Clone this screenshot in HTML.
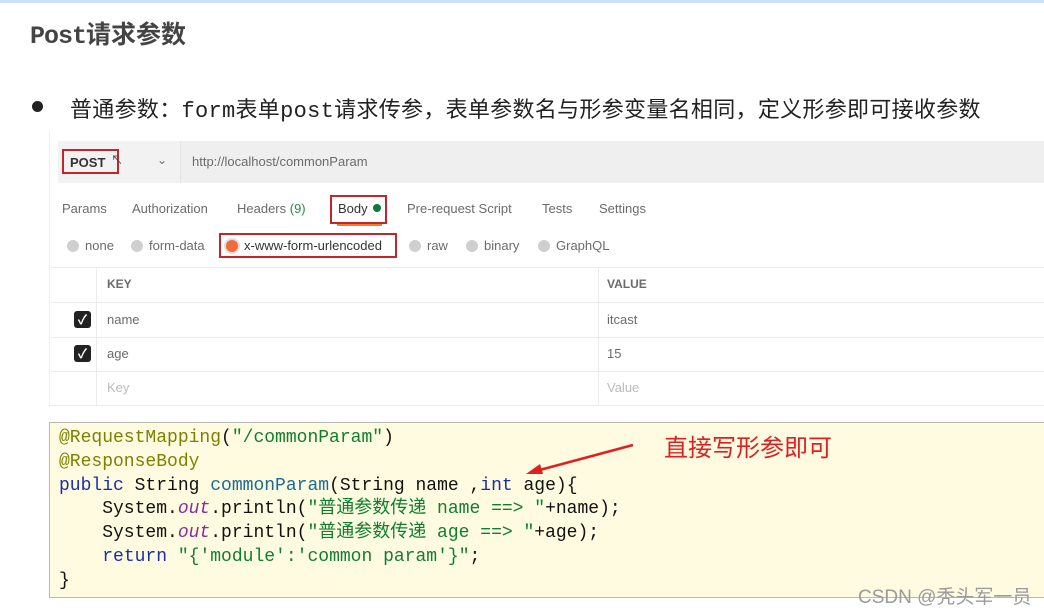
<!DOCTYPE html>
<html><head><meta charset="utf-8"><style>
*{margin:0;padding:0;box-sizing:border-box}
body{width:1044px;height:613px;background:#fff;position:relative;overflow:hidden;font-family:"Liberation Sans","Noto Sans CJK SC",sans-serif}
.a{position:absolute;white-space:nowrap}
.pm{font-size:13px;color:#6b6b6b}
.rb{position:absolute;border:2.5px solid #c0262a}
.dot{position:absolute;width:12px;height:12px;border-radius:50%;background:#cfcfcf}
.hl{position:absolute;height:1px;background:#ececec}
.vl{position:absolute;width:1px;background:#ececec}
.cb{position:absolute;width:17px;height:17px;background:#222;border-radius:3px;color:#fff;font-size:13px;line-height:17px;text-align:center;font-weight:bold}
.code{font-family:"Liberation Mono","Noto Sans CJK SC",monospace;font-size:18px;color:#111}
.an{color:#808000}.st{color:#0f7f2f}.kw{color:#1a2ea8}.fn{color:#1a6a9a}.it{color:#8a2c9a;font-style:italic}
</style></head><body>
<div class="a" style="left:0;top:0;width:1044px;height:3px;background:#cfe2f5"></div>
<div class="a" style="left:30px;top:15px;font-size:25px;font-weight:bold;color:#444;font-family:'Liberation Mono','Noto Sans CJK SC',monospace;letter-spacing:-1px">Post<span style="font-family:'Noto Sans CJK SC',sans-serif;letter-spacing:0">请求参数</span></div>
<div class="a" style="left:32px;top:101px;width:11px;height:11px;border-radius:50%;background:#222"></div>
<div class="a" style="left:70px;top:92px;font-size:22px;color:#222;font-family:'Liberation Mono','Noto Sans CJK SC',monospace;letter-spacing:0.3px">普通参数：form表单post请求传参，表单参数名与形参变量名相同，定义形参即可接收参数</div>

<!-- postman -->
<div class="a" style="left:49px;top:132px;width:995px;height:275px;background:#fff;border-left:1px solid #f0f0f0"></div>
<div class="a" style="left:58px;top:141px;width:986px;height:42px;background:#f2f2f2"></div>
<div class="a" style="left:180px;top:141px;width:864px;height:42px;background:#efefef;border-left:1px solid #e4e4e4"></div>
<div class="a pm" style="left:70px;top:155px;font-weight:bold;color:#333">POST</div>
<div class="a pm" style="left:157px;top:153px;font-size:12px">&#8964;</div>
<div class="a pm" style="left:192px;top:154px">http://localhost/commonParam</div>
<div class="rb" style="left:62px;top:149px;width:57px;height:25px"></div>
<div class="a" style="left:111px;top:151px;font-size:12px;color:#444">&#8598;</div>

<div class="a pm" style="left:62px;top:201px">Params</div>
<div class="a pm" style="left:132px;top:201px">Authorization</div>
<div class="a pm" style="left:237px;top:201px">Headers <span style="color:#2a8a4a">(9)</span></div>
<div class="a pm" style="left:338px;top:201px;color:#333">Body</div>
<div class="a" style="left:373px;top:204px;width:8px;height:8px;border-radius:50%;background:#0a7a3a"></div>
<div class="rb" style="left:330px;top:195px;width:57px;height:29px"></div>
<div class="a" style="left:337px;top:224px;width:45px;height:2px;background:#f07a3a"></div>
<div class="a pm" style="left:407px;top:201px">Pre-request Script</div>
<div class="a pm" style="left:542px;top:201px">Tests</div>
<div class="a pm" style="left:599px;top:201px">Settings</div>

<div class="dot" style="left:67px;top:240px"></div><div class="a pm" style="left:85px;top:238px">none</div>
<div class="dot" style="left:131px;top:240px"></div><div class="a pm" style="left:149px;top:238px">form-data</div>
<div class="dot" style="left:226px;top:240px;background:#f26b3a;box-shadow:0 0 0 2px #ddd"></div><div class="a pm" style="left:244px;top:238px;color:#333">x-www-form-urlencoded</div>
<div class="rb" style="left:219px;top:233px;width:178px;height:25px"></div>
<div class="dot" style="left:409px;top:240px"></div><div class="a pm" style="left:427px;top:238px">raw</div>
<div class="dot" style="left:466px;top:240px"></div><div class="a pm" style="left:484px;top:238px">binary</div>
<div class="dot" style="left:538px;top:240px"></div><div class="a pm" style="left:556px;top:238px">GraphQL</div>

<div class="hl" style="left:49px;top:267px;width:995px"></div>
<div class="hl" style="left:49px;top:302px;width:995px"></div>
<div class="hl" style="left:49px;top:337px;width:995px"></div>
<div class="hl" style="left:49px;top:371px;width:995px"></div>
<div class="hl" style="left:49px;top:405px;width:995px"></div>
<div class="vl" style="left:96px;top:267px;height:139px"></div>
<div class="vl" style="left:598px;top:267px;height:139px"></div>
<div class="a pm" style="left:107px;top:277px;font-weight:bold;font-size:12px">KEY</div>
<div class="a pm" style="left:607px;top:277px;font-weight:bold;font-size:12px">VALUE</div>
<div class="cb" style="left:74px;top:311px">✓</div>
<div class="a pm" style="left:107px;top:312px">name</div>
<div class="a pm" style="left:607px;top:312px">itcast</div>
<div class="cb" style="left:74px;top:345px">✓</div>
<div class="a pm" style="left:107px;top:346px">age</div>
<div class="a pm" style="left:607px;top:346px">15</div>
<div class="a pm" style="left:107px;top:380px;color:#bbb">Key</div>
<div class="a pm" style="left:607px;top:380px;color:#bbb">Value</div>

<!-- code -->
<div class="a" style="left:49px;top:422px;width:995px;height:176px;background:#fefbe1;border:1px solid #b8b8b0;border-right:none"></div>
<div class="a code" style="left:59px;top:427px;line-height:23.8px;white-space:pre"><span class="an">@RequestMapping</span>(<span class="st">"/commonParam"</span>)
<span class="an">@ResponseBody</span>
<span class="kw">public</span> String <span class="fn">commonParam</span>(String name ,<span class="kw">int</span> age){
    System.<span class="it">out</span>.println(<span class="st">"普通参数传递 name ==> "</span>+name);
    System.<span class="it">out</span>.println(<span class="st">"普通参数传递 age ==> "</span>+age);
    <span class="kw">return</span> <span class="st">"{'module':'common param'}"</span>;
}</div>
<svg class="a" style="left:0;top:0" width="1044" height="613"><line x1="633" y1="445" x2="536" y2="471" stroke="#e02020" stroke-width="2.5"/><polygon points="526,474 540,464 543,474" fill="#e02020"/></svg>
<div class="a" style="left:664px;top:428px;font-size:24px;color:#e02020;font-family:'Noto Sans CJK SC',sans-serif">直接写形参即可</div>
<div class="a" style="left:858px;top:582px;font-size:19px;color:#9a9a9a;font-family:'Liberation Sans','Noto Sans CJK SC',sans-serif">CSDN @秃头军一员</div>
</body></html>
